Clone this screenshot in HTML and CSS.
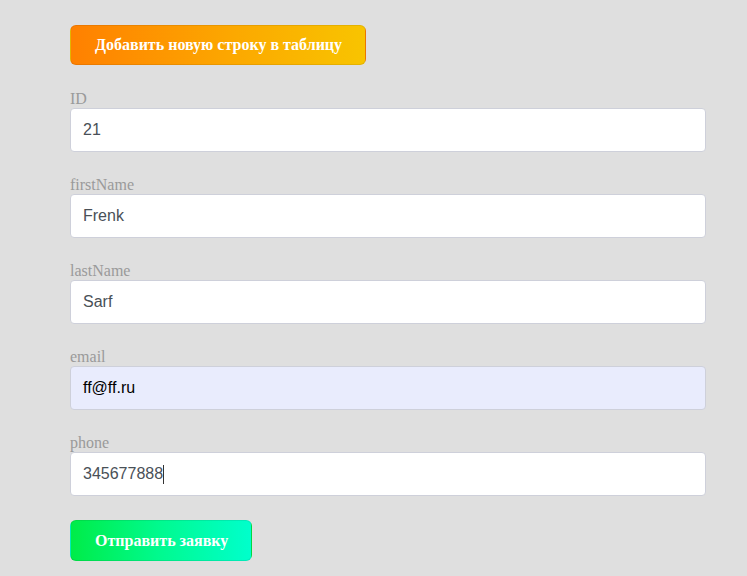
FILE: index.html
```html
<!DOCTYPE html>
<html>
<head>
<meta charset="utf-8">
<link rel="stylesheet" href="styles.css">
</head>
<body>
<div class="page">
  <button class="btn btn-add">Добавить новую строку в таблицу</button>
  <form class="form">
    <label class="field">
      <span class="label">ID</span>
      <span class="input">21</span>
    </label>
    <label class="field">
      <span class="label">firstName</span>
      <span class="input">Frenk</span>
    </label>
    <label class="field">
      <span class="label">lastName</span>
      <span class="input">Sarf</span>
    </label>
    <label class="field">
      <span class="label">email</span>
      <span class="input input-autofill">ff@ff.ru</span>
    </label>
    <label class="field">
      <span class="label">phone</span>
      <span class="input">345677888<span class="caret"></span></span>
    </label>
    <button type="button" class="btn btn-send">Отправить заявку</button>
  </form>
</div>
</body>
</html>
```

FILE: styles.css
```css
html, body {
  margin: 0;
  padding: 0;
  background: #dfdfdf;
}
.page {
  padding: 25px 41px 0 70px;
  display: flex;
  flex-direction: column;
  align-items: flex-start;
}
.btn {
  font-family: "Liberation Serif", "Times New Roman", serif;
  font-weight: bold;
  font-size: 16px;
  color: #fff;
  white-space: nowrap;
  border: 1px solid rgba(0,0,0,0.08);
  border-radius: 6px;
  padding: 0 23px 0 24px;
  height: 40px;
  cursor: pointer;
}
.btn-add {
  background: linear-gradient(90deg, #ff8000 0%, #fca800 55%, #f8c400 100%);
}
.btn-send {
  height: 41px;
  margin-top: 24px;
  background: linear-gradient(90deg, #00ec48 0%, #00fa90 50%, #00ffcc 100%);
}
.form {
  align-self: stretch;
  display: flex;
  flex-direction: column;
  align-items: flex-start;
  margin-top: 25px;
}
.field {
  align-self: stretch;
  display: flex;
  flex-direction: column;
  margin-bottom: 24px;
}
.field:nth-last-of-type(1) {
  margin-bottom: 0;
}
.label {
  font-family: "Liberation Serif", "Times New Roman", serif;
  font-size: 16px;
  line-height: 18px;
  color: #9a9a9a;
}
.input {
  box-sizing: border-box;
  height: 44px;
  display: flex;
  align-items: center;
  padding: 0 12px;
  background: #fff;
  border: 1px solid #ced0da;
  border-radius: 4px;
  font-family: "Liberation Sans", Arial, sans-serif;
  font-size: 16px;
  color: #495057;
}
.input-autofill {
  background: #e9ecfd;
  color: #000;
}
.caret {
  display: inline-block;
  width: 1px;
  height: 19px;
  background: #333;
  margin-left: 0;
}
```
